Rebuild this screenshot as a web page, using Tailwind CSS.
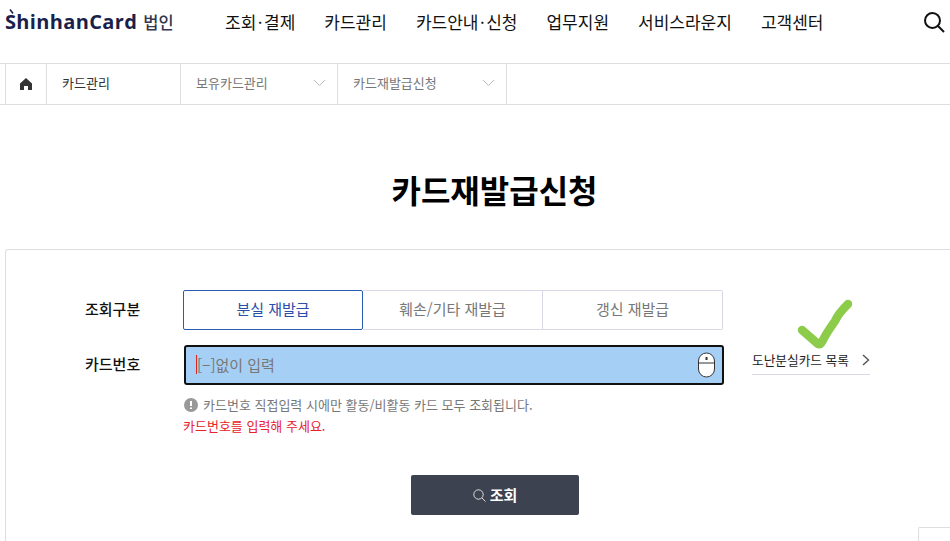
<!DOCTYPE html>
<html lang="ko">
<head>
  <meta charset="UTF-8"/>
  <title>카드재발급신청</title>
  <script src="https://cdn.jsdelivr.net/npm/@tailwindcss/browser@4"></script>
</head>
<body class="relative h-[541px] w-[950px] overflow-hidden bg-white text-[#111] font-['Noto_Sans_CJK_KR','Noto_Sans',sans-serif]">

  <!-- Header -->
  <header class="flex h-[64px] border-b border-[#dedede]">
    <div class="relative flex h-[44px] w-[225px] items-center pl-[5px]">
      <span class="font-['Open_Sans',sans-serif] text-[20px] font-bold tracking-[0.35px] text-[#1a1f4b]">ShinhanCard</span>
      <svg class="absolute left-[9px] top-[9px] h-[5px] w-[5px]" viewBox="0 0 5 5" fill="none" stroke="#1a1f4b" stroke-width="1.6"><path d="M1 0.5l3 4"/></svg>
      <span class="ml-[6px] text-[16.5px] font-medium text-[#33374f]">법인</span>
    </div>
    <nav class="flex h-[44px] items-center gap-[29px] text-[17px]">
      <a>조회<span class="mx-[1.5px]">·</span>결제</a>
      <a>카드관리</a>
      <a>카드안내<span class="mx-[1.5px]">·</span>신청</a>
      <a>업무지원</a>
      <a>서비스라운지</a>
      <a>고객센터</a>
    </nav>
    <svg class="ml-auto mr-[5px] mt-[11px] h-[22px] w-[22px]" viewBox="0 0 22 22" fill="none" stroke="#111" stroke-width="2"><circle cx="9.5" cy="9.5" r="7.5"/><path d="M15 15l6 6"/></svg>
  </header>

  <!-- Breadcrumb -->
  <div class="-mt-px flex h-[42px] border-y border-[#dedede] pl-[5px] text-[13px]">
    <div class="flex w-[42px] items-center justify-center border-x border-[#dedede]">
      <svg class="h-[14px] w-[14px]" viewBox="0 0 14 14" fill="#333"><path d="M7 1L1 6.5V13h4V9h4v4h4V6.5z"/></svg>
    </div>
    <div class="flex w-[134px] items-center border-r border-[#dedede] pb-[2px] pl-[15px] text-[#333]">카드관리</div>
    <div class="flex w-[157px] items-center justify-between border-r border-[#dedede] pb-[2px] pl-[15px] pr-[11px] text-[#777]">
      보유카드관리
      <svg class="h-[8px] w-[13px]" viewBox="0 0 13 8" fill="none" stroke="#bbb"><path d="M1 1l5.5 5.5L12 1"/></svg>
    </div>
    <div class="flex w-[169px] items-center justify-between border-r border-[#dedede] pb-[2px] pl-[15px] pr-[11px] text-[#777]">
      카드재발급신청
      <svg class="h-[8px] w-[13px]" viewBox="0 0 13 8" fill="none" stroke="#bbb"><path d="M1 1l5.5 5.5L12 1"/></svg>
    </div>
  </div>

  <h1 class="mt-[60px] h-[48px] pl-[39px] text-center text-[32px] leading-[48px] font-bold text-black">카드재발급신청</h1>

  <!-- Form card -->
  <section class="ml-[5px] mt-[36px] h-[292px] w-[960px] rounded-t-[3px] border border-b-0 border-[#dedede] pl-[79px] pt-[40px]">
    <div class="flex items-center">
      <div class="w-[98px] pb-[2px] text-[15px] font-medium">조회구분</div>
      <div class="flex h-[40px] w-[540px] text-[15px] text-[#777]">
        <div class="flex w-[180px] items-center justify-center rounded-[2px] border border-[#2a5db0] pb-[2px] text-[#2a4fa8]">분실 재발급</div>
        <div class="flex w-[180px] items-center justify-center border-y border-r border-[#d8d8e6] pb-[2px]">훼손/기타 재발급</div>
        <div class="flex w-[180px] items-center justify-center rounded-r-[2px] border-y border-r border-[#d8d8e6] pb-[2px]">갱신 재발급</div>
      </div>
    </div>

    <div class="mt-[15px] flex items-center">
      <div class="w-[99px] pb-[2px] text-[15px] font-medium">카드번호</div>
      <div class="flex h-[40px] w-[540px] items-center justify-between rounded-[3px] border-2 border-[#111] bg-[#a6cff5] pl-[10px] pr-[7px] text-[15px] text-[#777]">
        <span class="mb-[2px] border-l border-[#d22] leading-[19px]">[−]없이 입력</span>
        <svg class="h-[26px] w-[17px]" viewBox="0 0 17 26" fill="#fff" stroke="#333"><rect x="0.5" y="1" width="16" height="24" rx="8"/><path d="M0.5 11h16" fill="none"/><path d="M8.5 5v3" stroke-width="2"/></svg>
      </div>
      <a class="ml-[28px] flex h-[30px] w-[118px] items-center justify-between self-start border-b border-[#d8d8e6] text-[12.7px] text-[#222]">
        도난분실카드 목록
        <svg class="h-[12px] w-[8px]" viewBox="0 0 8 12" fill="none" stroke="#555" stroke-width="1.4"><path d="M1 1l5.5 5L1 11"/></svg>
      </a>
    </div>

    <div class="ml-[99px] mt-[10px] flex h-[20px] items-center text-[13px] text-[#777]">
      <svg class="mr-[5px] h-[14px] w-[14px]" viewBox="0 0 14 14"><circle cx="7" cy="7" r="7" fill="#999"/><path d="M7 3v5M7 9.5v1.5" stroke="#fff" stroke-width="2"/></svg>
      카드번호 직접입력 시에만 활동/비활동 카드 모두 조회됩니다.
    </div>
    <p class="ml-[98px] mt-[1px] text-[13px] leading-[20px] text-[#e8212b]">카드번호를 입력해 주세요.</p>

    <button class="ml-[326px] mt-[39px] flex h-[40px] w-[168px] items-center justify-center gap-[4px] rounded-[2px] bg-[#3d4250] text-[15px] font-bold text-white">
      <svg class="h-[13px] w-[13px]" viewBox="0 0 13 13" fill="none" stroke="#ddd"><circle cx="5.5" cy="5.5" r="4.7"/><path d="M9 9l3.5 3.5"/></svg>
      조회
    </button>
  </section>

  <!-- Hand-drawn check mark over the form -->
  <svg class="absolute left-[795px] top-[295px] h-[60px] w-[62px]" viewBox="0 0 62 60" fill="none" stroke="#8ccc4a" stroke-width="8.5" stroke-linecap="round" stroke-linejoin="round"><path d="M7 35l16 14c2 1 4-1 5-4 4-8 8-13 12-19 3-7 9-13 13-17"/></svg>

  <div class="absolute left-[918px] top-[527px] h-[14px] w-[32px] rounded-tl-[2px] border-l border-t border-[#dedede]"></div>
</body>
</html>
